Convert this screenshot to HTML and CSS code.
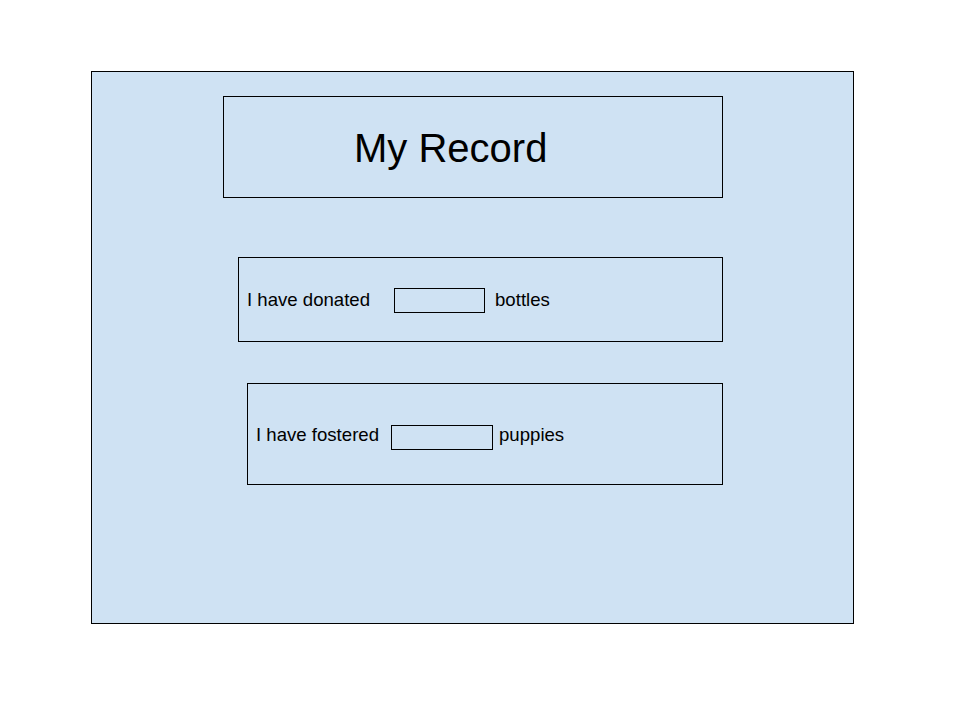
FILE: index.html
```html
<!DOCTYPE html>
<html>
<head>
<meta charset="utf-8">
<link rel="stylesheet" href="styles.css">
</head>
<body>
<div class="canvas">
  <div class="title-box"><h1 class="title">My Record</h1></div>
  <div class="row row-donated">
    <span class="label">I have donated</span>
    <span class="field field-donated"></span>
    <span class="unit unit-donated">bottles</span>
  </div>
  <div class="row row-fostered">
    <span class="label">I have fostered</span>
    <span class="field field-fostered"></span>
    <span class="unit unit-fostered">puppies</span>
  </div>
</div>
</body>
</html>
```

FILE: styles.css
```css
html, body {
  margin: 0;
  padding: 0;
  background: #ffffff;
}
body {
  font-family: "Liberation Sans", Arial, sans-serif;
  color: #000;
}
.canvas {
  box-sizing: border-box;
  margin: 71px 0 0 91px;
  width: 763px;
  height: 553px;
  border: 1px solid #000;
  background: #cfe2f3;
  display: flex;
  flex-direction: column;
  align-items: flex-start;
}
.title-box {
  box-sizing: border-box;
  margin: 24px 0 0 131px;
  width: 500px;
  height: 102px;
  border: 1px solid #000;
  display: flex;
  align-items: center;
  padding: 2px 0 0 130px;
}
.title {
  margin: 0;
  font-size: 40px;
  font-weight: normal;
  line-height: 1;
}
.row {
  box-sizing: border-box;
  border: 1px solid #000;
  display: flex;
  align-items: center;
  font-size: 18.6px;
  padding-left: 8px;
}
.row-donated {
  margin: 59px 0 0 146px;
  width: 485px;
  height: 85px;
  padding-top: 1px;
}
.row-fostered {
  margin: 41px 0 0 155px;
  width: 476px;
  height: 102px;
  padding-top: 1px;
}
.field {
  box-sizing: border-box;
  display: block;
  height: 25px;
  border: 1px solid #000;
  background: #cfe2f3;
}
.field-donated {
  width: 91px;
  margin-left: 24px;
  margin-top: 1px;
}
.field-fostered {
  width: 102px;
  margin-left: 12px;
  margin-top: 6px;
}
.unit-donated {
  margin-left: 10px;
}
.unit-fostered {
  margin-left: 6px;
}
```
